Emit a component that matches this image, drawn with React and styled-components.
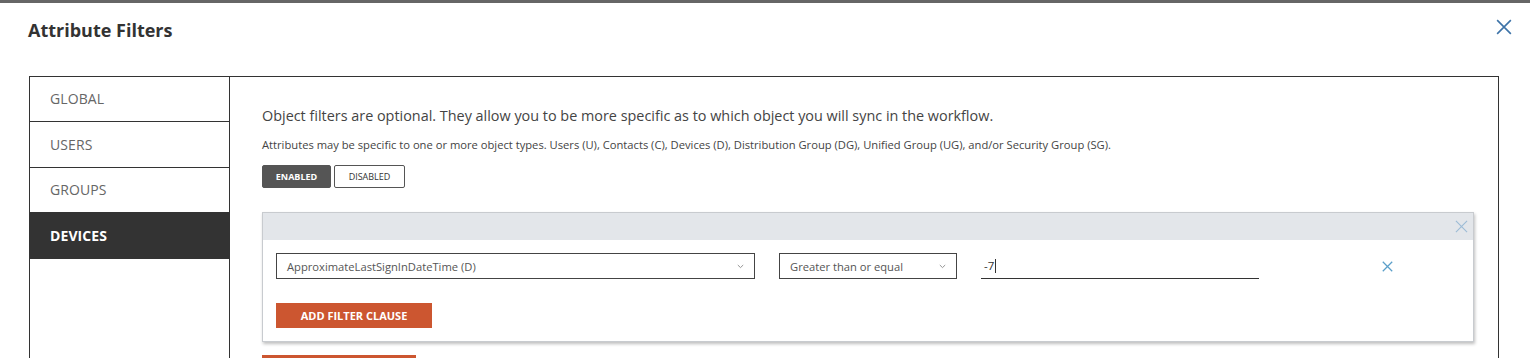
import React, { useState } from 'react';
import styled, { createGlobalStyle } from 'styled-components';

const GlobalStyle = createGlobalStyle`
  html, body {
    margin: 0;
    padding: 0;
    background: #fff;
    font-family: "Open Sans", "Liberation Sans", sans-serif;
    overflow: hidden;
  }
`;

const Modal = styled.div`
  border-top: 3px solid #666;
  height: 100vh;
  box-sizing: border-box;
  overflow: hidden;
`;

const Header = styled.div`
  display: flex;
  justify-content: space-between;
  align-items: flex-start;
  padding: 16px 18px 0 28px;
  height: 73px;
  box-sizing: border-box;
`;

const Title = styled.h2`
  margin: 0;
  font-size: 18px;
  font-weight: 700;
  color: #333;
  line-height: 22px;
`;

const IconButton = styled.button`
  border: none;
  background: none;
  padding: 0;
  cursor: pointer;
  display: flex;
  color: ${p => p.color || '#4a7fb0'};
`;

const Panel = styled.div`
  margin: 0 31px 0 29px;
  border: 1px solid #333;
  display: grid;
  grid-template-columns: 200px 1fr;
  min-height: 320px;
`;

const Sidebar = styled.ul`
  list-style: none;
  margin: 0;
  padding: 0;
  border-right: 1px solid #333;
`;

const Tab = styled.li`
  height: ${p => p.h}px;
  display: flex;
  align-items: center;
  padding-left: 20px;
  padding-bottom: 1px;
  font-size: 14px;
  letter-spacing: 0.1px;
  color: ${p => (p.active ? '#fff' : '#666')};
  background: ${p => (p.active ? '#333' : '#fff')};
  font-weight: ${p => (p.active ? 700 : 400)};
  border-bottom: ${p => (p.divider ? '1px solid #333' : 'none')};
  box-sizing: border-box;
`;

const Content = styled.div`
  padding: 29px 24px 0 32px;
`;

const Lead = styled.p`
  margin: 0;
  font-size: 14.4px;
  color: #444;
  line-height: 20px;
`;

const Note = styled.p`
  margin: 12px 0 0;
  font-size: 11.2px;
  color: #444;
  line-height: 14px;
`;

const Toggle = styled.div`
  display: flex;
  gap: 3px;
  margin-top: 13px;
`;

const ToggleButton = styled.button`
  height: 23px;
  padding: 0;
  font-family: inherit;
  font-size: 9px;
  border-radius: 2px;
  border: 1px solid #555;
  background: ${p => (p.active ? '#555' : '#fff')};
  color: ${p => (p.active ? '#fff' : '#333')};
  font-weight: ${p => (p.active ? 700 : 400)};
  width: ${p => p.w}px;
`;

const Card = styled.div`
  margin-top: 24px;
  border: 1px solid #c8cbcf;
  box-shadow: 1px 2px 3px rgba(0, 0, 0, 0.25);
  background: #fff;
`;

const CardHead = styled.div`
  height: 27px;
  background: #e3e6ea;
  display: flex;
  justify-content: flex-end;
  align-items: center;
  padding-right: 5px;
`;

const CardBody = styled.div`
  padding: 13px;
`;

const ClauseRow = styled.div`
  display: flex;
  align-items: center;
`;

const Select = styled.div`
  width: ${p => p.w}px;
  height: 26px;
  box-sizing: border-box;
  border: 1px solid #444;
  display: flex;
  align-items: center;
  justify-content: space-between;
  padding: 0 10px;
  font-size: 11.2px;
  color: #555;
  margin-right: ${p => p.gap}px;
`;

const Chevron = styled.span`
  display: flex;
  color: #888;
`;

const ValueInput = styled.div`
  width: 278px;
  height: 25px;
  border-bottom: 1px solid #333;
  font-size: 11.5px;
  color: #333;
  display: flex;
  align-items: center;
  box-sizing: border-box;
  padding-left: 3px;
  margin-right: 123px;
`;

const Caret = styled.span`
  display: inline-block;
  width: 1px;
  height: 14px;
  background: #333;
  margin-left: 1px;
`;

const OrangeButton = styled.button`
  height: 25px;
  width: ${p => p.w}px;
  background: #cc5630;
  color: #fff;
  border: none;
  font-family: inherit;
  font-size: 11px;
  font-weight: 700;
  margin-top: ${p => p.mt}px;
  display: block;
`;

const X = ({ size = 14, stroke = 1.3 }) => (
  <svg width={size} height={size} viewBox="0 0 14 14">
    <path d="M1 1L13 13M13 1L1 13" stroke="currentColor" strokeWidth={stroke} fill="none" />
  </svg>
);

const Down = () => (
  <svg width="7" height="5" viewBox="0 0 7 5">
    <path d="M0.8 1L3.5 3.6L6.2 1" stroke="currentColor" strokeWidth="0.9" fill="none" />
  </svg>
);

const tabs = [
  { label: 'GLOBAL', h: 45, divider: true },
  { label: 'USERS', h: 46, divider: true },
  { label: 'GROUPS', h: 44 },
  { label: 'DEVICES', h: 47, active: true },
];

export default function App() {
  const [enabled, setEnabled] = useState(true);
  return (
    <>
      <GlobalStyle />
      <Modal>
        <Header>
          <Title>Attribute Filters</Title>
          <IconButton color="#3d73a8"><X size={16} stroke={1.4} /></IconButton>
        </Header>
        <Panel>
          <Sidebar>
            {tabs.map(t => (
              <Tab key={t.label} h={t.h} active={t.active} divider={t.divider}>{t.label}</Tab>
            ))}
          </Sidebar>
          <Content>
            <Lead>Object filters are optional. They allow you to be more specific as to which object you will sync in the workflow.</Lead>
            <Note>Attributes may be specific to one or more object types. Users (U), Contacts (C), Devices (D), Distribution Group (DG), Unified Group (UG), and/or Security Group (SG).</Note>
            <Toggle>
              <ToggleButton w={69} active={enabled} onClick={() => setEnabled(true)}>ENABLED</ToggleButton>
              <ToggleButton w={71} active={!enabled} onClick={() => setEnabled(false)}>DISABLED</ToggleButton>
            </Toggle>
            <Card>
              <CardHead>
                <IconButton color="#9dbcd6"><X size={13} stroke={1.2} /></IconButton>
              </CardHead>
              <CardBody>
                <ClauseRow>
                  <Select w={479} gap={24}>
                    ApproximateLastSignInDateTime (D)
                    <Chevron><Down /></Chevron>
                  </Select>
                  <Select w={178} gap={24}>
                    Greater than or equal
                    <Chevron><Down /></Chevron>
                  </Select>
                  <ValueInput>-7<Caret /></ValueInput>
                  <IconButton color="#5b9fc9"><X size={11} stroke={1.6} /></IconButton>
                </ClauseRow>
                <OrangeButton w={156} mt={24}>ADD FILTER CLAUSE</OrangeButton>
              </CardBody>
            </Card>
            <OrangeButton w={154} mt={13} />
          </Content>
        </Panel>
      </Modal>
    </>
  );
}
